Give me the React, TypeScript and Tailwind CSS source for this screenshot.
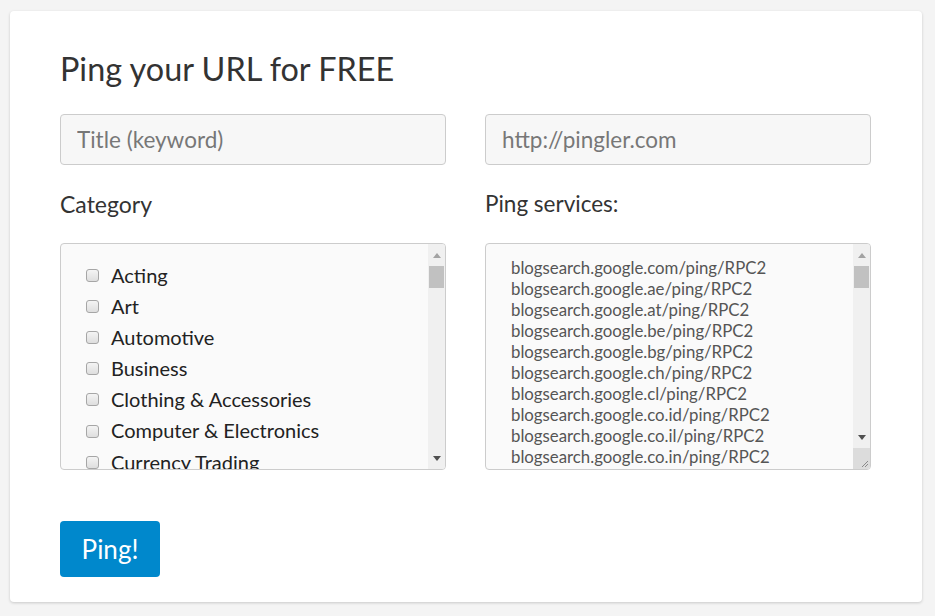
import React from 'react';

const categories = [
  'Acting',
  'Art',
  'Automotive',
  'Business',
  'Clothing & Accessories',
  'Computer & Electronics',
  'Currency Trading',
];

const services = [
  'blogsearch.google.com/ping/RPC2',
  'blogsearch.google.ae/ping/RPC2',
  'blogsearch.google.at/ping/RPC2',
  'blogsearch.google.be/ping/RPC2',
  'blogsearch.google.bg/ping/RPC2',
  'blogsearch.google.ch/ping/RPC2',
  'blogsearch.google.cl/ping/RPC2',
  'blogsearch.google.co.id/ping/RPC2',
  'blogsearch.google.co.il/ping/RPC2',
  'blogsearch.google.co.in/ping/RPC2',
];

// classic windows-ish scrollbar, drawn by hand
const ScrollBar: React.FC<{ grip?: boolean }> = ({ grip }) => (
  <div className="w-[17px] shrink-0 bg-[#f0f0f0] flex flex-col items-center">
    <div className="h-[22px] w-full flex items-center justify-center">
      <svg width="8" height="5" viewBox="0 0 8 5">
        <path d="M0 5 L4 0 L8 5 Z" fill="#a3a3a3" />
      </svg>
    </div>
    <div className="w-[15px] h-[22px] bg-[#c1c1c1]" />
    <div className="flex-1" />
    <div className="h-[22px] w-full flex items-center justify-center">
      <svg width="8" height="5" viewBox="0 0 8 5">
        <path d="M0 0 L8 0 L4 5 Z" fill="#505050" />
      </svg>
    </div>
    {grip && (
      <div className="h-[21px] w-full bg-[#dcdcdc] relative">
        <svg width="17" height="21" viewBox="0 0 17 21" className="absolute inset-0">
          <path d="M15 13 L9 19 M15 16 L12 19" stroke="#8a8a8a" strokeWidth="1" />
        </svg>
      </div>
    )}
  </div>
);

export default function App() {
  return (
    <div className="min-h-[616px] bg-[#f4f4f4] pt-[11px] pl-[10px] pr-[13px] pb-[14px] font-['Lato',sans-serif]">
      <div className="bg-white rounded-[4px] shadow-[0_1px_3px_rgba(0,0,0,0.18)] pt-[38px] pl-[50px] pr-[51px] pb-[25px]">
        <h1 className="text-[32.4px] leading-[40px] text-[#333] font-normal">Ping your URL for FREE</h1>

        <div className="grid grid-cols-2 gap-x-[39px] mt-[25px]">
          <div>
            <input
              className="w-full h-[51px] bg-[#f7f7f7] border border-[#cccccc] rounded-[4px] pl-[16px] text-[22.5px] text-[#555] placeholder:text-[#777] outline-none"
              placeholder="Title (keyword)"
            />
            <div className="mt-[23px] text-[23px] leading-[32px] text-[#333]">Category</div>
            <div className="mt-[23px] h-[227px] border border-[#cccccc] rounded-[4px] bg-[#fafafa] flex overflow-hidden">
              <div className="flex-1 overflow-hidden pt-[15.5px] pl-[25px]">
                {categories.map((c) => (
                  <div key={c} className="flex items-center h-[31.2px] text-[20px] leading-[31.2px] text-[#222]">
                    <span className="w-[13px] h-[13px] rounded-[3px] border border-[#a6a6a6] bg-gradient-to-b from-[#f4f4f4] to-[#dedede] shrink-0 mr-[12px]" />
                    <span>{c}</span>
                  </div>
                ))}
              </div>
              <ScrollBar />
            </div>
          </div>

          <div>
            <input
              className="w-full h-[51px] bg-[#f7f7f7] border border-[#cccccc] rounded-[4px] pl-[16px] text-[22.5px] text-[#555] placeholder:text-[#777] outline-none"
              placeholder="http://pingler.com"
            />
            <div className="mt-[23px] text-[22.5px] leading-[32px] text-[#333]">Ping services:</div>
            <div className="mt-[23px] h-[227px] border border-[#cccccc] rounded-[4px] bg-[#fafafa] flex overflow-hidden">
              <div className="flex-1 overflow-hidden pt-[12.8px] pl-[25px] text-[16.8px] leading-[21px] text-[#555]">
                {services.map((s) => (
                  <div key={s}>{s}</div>
                ))}
              </div>
              <ScrollBar grip />
            </div>
          </div>
        </div>

        <button className="mt-[51px] w-[100px] h-[56px] bg-[#0088cc] rounded-[4px] text-white text-[26px] leading-none">
          Ping!
        </button>
      </div>
    </div>
  );
}
